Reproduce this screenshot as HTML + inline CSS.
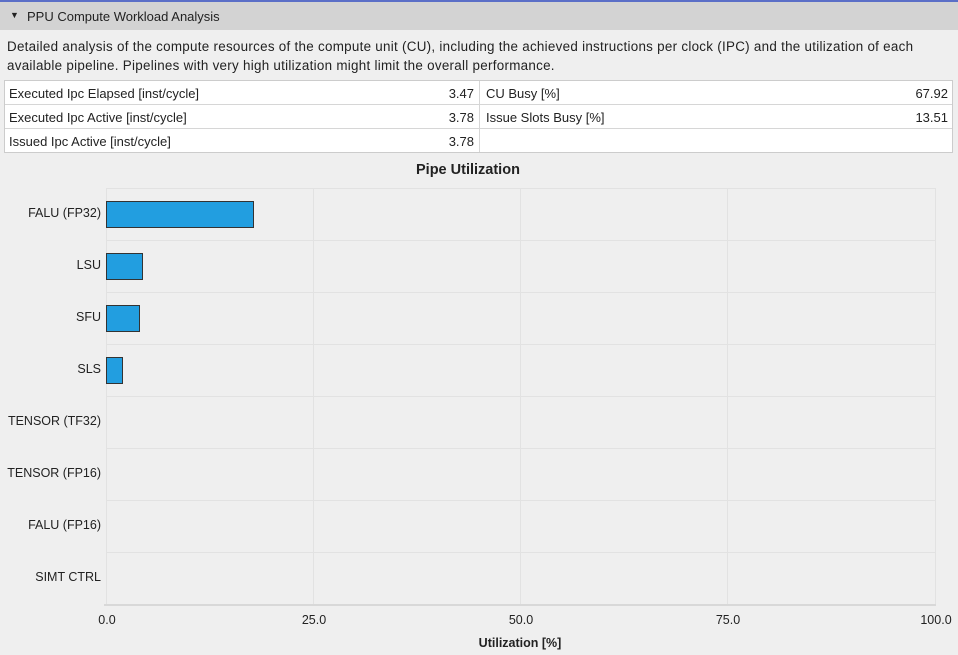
<!DOCTYPE html><html><head><style>
body{margin:0;width:958px;height:655px;background:#efefef;font-family:"Liberation Sans",sans-serif;color:#222;position:relative;overflow:hidden}
.a{position:absolute;white-space:nowrap}
.hdr{left:0;top:0;width:958px;height:30px;background:#d3d3d3;border-top:2px solid #5b6fc7;box-sizing:border-box}
.g{position:absolute;background:#e2e2e2}
.lab{position:absolute;right:857px;font-size:12.5px;text-align:right;white-space:nowrap}
.bar{position:absolute;left:106px;background:#229ee0;border:1px solid #333;box-sizing:border-box;height:25px}
.tk{position:absolute;top:613px;font-size:12.5px;transform:translateX(-50%)}
</style></head><body>
<div class="a hdr"></div>
<div class="a" style="left:10px;top:10px;font-size:9px">&#9660;</div>
<div class="a" style="left:27px;top:9px;font-size:13px">PPU Compute Workload Analysis</div>
<div class="a" style="left:7px;top:37px;font-size:13.4px;letter-spacing:0.28px;line-height:19px">Detailed analysis of the compute resources of the compute unit (CU), including the achieved instructions per clock (IPC) and the utilization of each<br>available pipeline. Pipelines with very high utilization might limit the overall performance.</div>
<div style="position:absolute;left:4px;top:80px;width:949px;height:73px;background:#fff;border:1px solid #ccc;box-sizing:border-box;font-size:13px">
<div class="g" style="left:0;right:0;top:23px;height:1px;background:#d6d6d6"></div>
<div class="g" style="left:0;right:0;top:47px;height:1px;background:#d6d6d6"></div>
<div class="g" style="left:474px;top:0;bottom:0;width:1px;background:#d6d6d6"></div>
<div class="a" style="left:4px;top:5px">Executed Ipc Elapsed [inst/cycle]</div><div class="a" style="right:478px;top:5px">3.47</div>
<div class="a" style="left:4px;top:29px">Executed Ipc Active [inst/cycle]</div><div class="a" style="right:478px;top:29px">3.78</div>
<div class="a" style="left:4px;top:53px">Issued Ipc Active [inst/cycle]</div><div class="a" style="right:478px;top:53px">3.78</div>
<div class="a" style="left:481px;top:5px">CU Busy [%]</div><div class="a" style="right:4px;top:5px">67.92</div>
<div class="a" style="left:481px;top:29px">Issue Slots Busy [%]</div><div class="a" style="right:4px;top:29px">13.51</div>
</div>
<div class="a" style="left:416px;top:162px;font-size:14.5px;font-weight:bold">Pipe Utilization</div>
<div class="g" style="left:106px;top:188px;width:1px;height:417px"></div>
<div class="g" style="left:313px;top:188px;width:1px;height:417px"></div>
<div class="g" style="left:520px;top:188px;width:1px;height:417px"></div>
<div class="g" style="left:727px;top:188px;width:1px;height:417px"></div>
<div class="g" style="left:935px;top:188px;width:1px;height:417px"></div>
<div class="g" style="left:106px;top:188px;width:830px;height:1px"></div>
<div class="g" style="left:106px;top:240px;width:830px;height:1px"></div>
<div class="g" style="left:106px;top:292px;width:830px;height:1px"></div>
<div class="g" style="left:106px;top:344px;width:830px;height:1px"></div>
<div class="g" style="left:106px;top:396px;width:830px;height:1px"></div>
<div class="g" style="left:106px;top:448px;width:830px;height:1px"></div>
<div class="g" style="left:106px;top:500px;width:830px;height:1px"></div>
<div class="g" style="left:106px;top:552px;width:830px;height:1px"></div>
<div class="g" style="left:104px;top:604px;width:832px;height:2px;background:#d8d8d8"></div>
<div class="lab" style="top:206px">FALU (FP32)</div>
<div class="lab" style="top:258px">LSU</div>
<div class="lab" style="top:310px">SFU</div>
<div class="lab" style="top:362px">SLS</div>
<div class="lab" style="top:414px">TENSOR (TF32)</div>
<div class="lab" style="top:466px">TENSOR (FP16)</div>
<div class="lab" style="top:518px">FALU (FP16)</div>
<div class="lab" style="top:570px">SIMT CTRL</div>
<div class="bar" style="top:201px;width:148px;height:27px"></div>
<div class="bar" style="top:253px;width:37px;height:27px"></div>
<div class="bar" style="top:305px;width:34px;height:27px"></div>
<div class="bar" style="top:357px;width:17px;height:27px"></div>
<div class="tk" style="left:107px">0.0</div>
<div class="tk" style="left:314px">25.0</div>
<div class="tk" style="left:521px">50.0</div>
<div class="tk" style="left:728px">75.0</div>
<div class="tk" style="left:936px">100.0</div>
<div class="a" style="left:520px;top:636px;transform:translateX(-50%);font-size:12.5px;font-weight:bold">Utilization [%]</div>
</body></html>
